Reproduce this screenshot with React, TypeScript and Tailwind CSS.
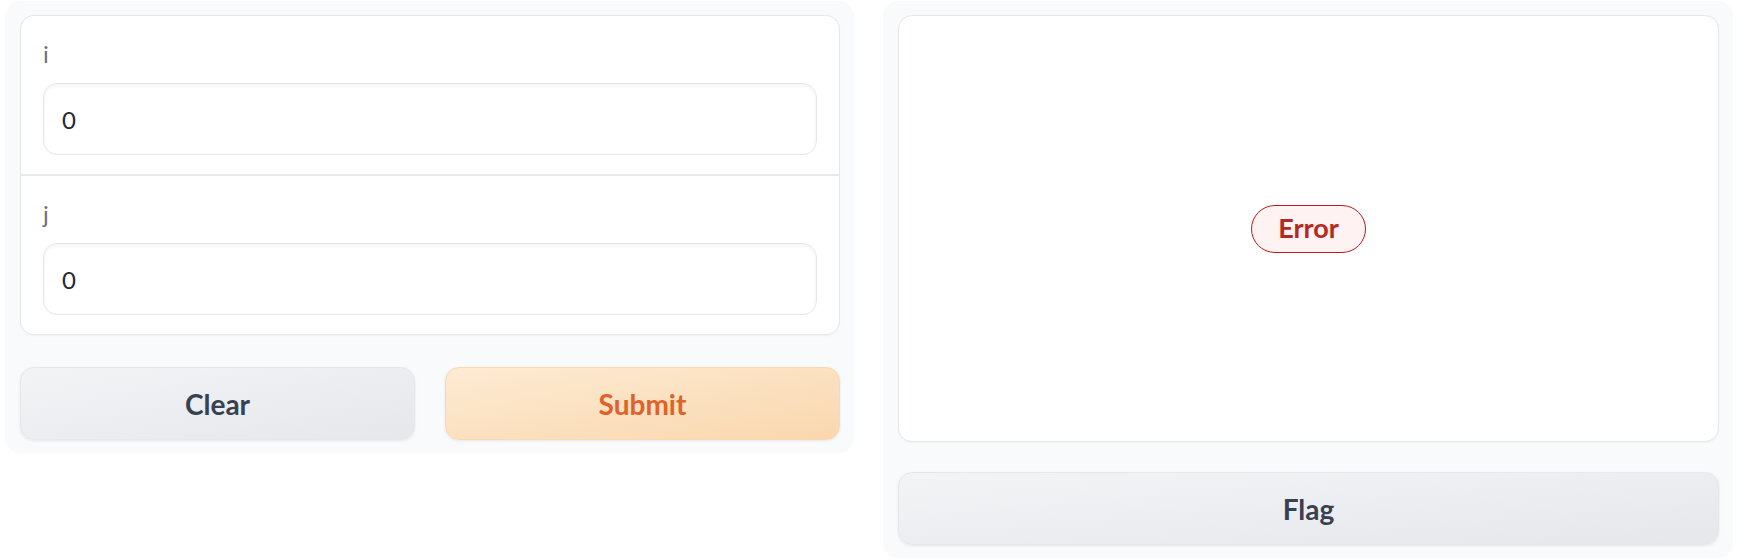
import React from 'react';

const font = { fontFamily: 'Lato, "Noto Sans", sans-serif' };

const NumberField = ({ label, value }: { label: string; value: string }) => (
  <div className="bg-white px-[22px] pt-[20px] pb-[19px]">
    <div className="text-[24px] leading-[36px] text-[#6b7280] mb-[11px]">{label}</div>
    <input
      readOnly
      value={value}
      className="block w-full h-[72px] rounded-[14px] border border-[#e5e7eb] bg-white px-[18px] text-[24px] text-[#1f2937] outline-none shadow-[inset_0_2px_4px_rgba(0,0,0,0.05)]"
    />
  </div>
);

const SecondaryButton = ({ children }: { children: React.ReactNode }) => (
  <button className="flex-1 h-[73px] rounded-[14px] border border-[#e5e7eb] bg-gradient-to-br from-[#f3f4f6] to-[#e5e7eb] text-[28px] font-bold text-[#374151] shadow-[0_1px_3px_rgba(0,0,0,0.08)]">
    {children}
  </button>
);

export default function App() {
  return (
    <div className="w-[1758px] h-[560px] bg-white pl-[5px] pt-[1px] flex items-start gap-[29px]" style={font}>
      {/* inputs panel */}
      <div className="w-[849px] bg-[#f9fafb] rounded-[15px] p-[14px] pl-[15px] pb-[13px] flex flex-col gap-[32px]">
        <div className="rounded-[14px] border border-[#e5e7eb] overflow-hidden bg-[#e5e7eb] flex flex-col gap-[2px] shadow-[0_1px_2px_rgba(0,0,0,0.04)]">
          <NumberField label="i" value="0" />
          <NumberField label="j" value="0" />
        </div>
        <div className="flex gap-[30px]">
          <SecondaryButton>Clear</SecondaryButton>
          <button className="flex-1 h-[73px] rounded-[14px] border border-[#fed7aa] bg-gradient-to-br from-[#fdebd3] to-[#f9d7ae] text-[28px] font-bold text-[#e0612a] shadow-[0_1px_3px_rgba(0,0,0,0.08)]">
            Submit
          </button>
        </div>
      </div>

      {/* output panel */}
      <div className="w-[850px] h-[557px] bg-[#f9fafb] rounded-[15px] p-[14px] pl-[15px] pb-[13px] flex flex-col gap-[30px]">
        <div className="h-[427px] rounded-[14px] border border-[#e5e7eb] bg-white flex items-center justify-center shadow-[0_1px_2px_rgba(0,0,0,0.04)]">
          <span className="h-[48px] px-[26px] rounded-full border border-[#b91c1c] bg-[#fef2f2] text-[#b32a24] text-[27px] font-bold flex items-center">
            Error
          </span>
        </div>
        <div className="flex">
          <SecondaryButton>Flag</SecondaryButton>
        </div>
      </div>
    </div>
  );
}
